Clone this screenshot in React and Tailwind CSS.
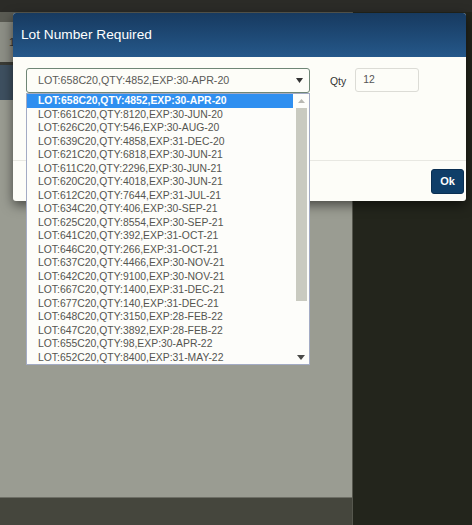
import React from 'react';

const lots = [
  'LOT:658C20,QTY:4852,EXP:30-APR-20',
  'LOT:661C20,QTY:8120,EXP:30-JUN-20',
  'LOT:626C20,QTY:546,EXP:30-AUG-20',
  'LOT:639C20,QTY:4858,EXP:31-DEC-20',
  'LOT:621C20,QTY:6818,EXP:30-JUN-21',
  'LOT:611C20,QTY:2296,EXP:30-JUN-21',
  'LOT:620C20,QTY:4018,EXP:30-JUN-21',
  'LOT:612C20,QTY:7644,EXP:31-JUL-21',
  'LOT:634C20,QTY:406,EXP:30-SEP-21',
  'LOT:625C20,QTY:8554,EXP:30-SEP-21',
  'LOT:641C20,QTY:392,EXP:31-OCT-21',
  'LOT:646C20,QTY:266,EXP:31-OCT-21',
  'LOT:637C20,QTY:4466,EXP:30-NOV-21',
  'LOT:642C20,QTY:9100,EXP:30-NOV-21',
  'LOT:667C20,QTY:1400,EXP:31-DEC-21',
  'LOT:677C20,QTY:140,EXP:31-DEC-21',
  'LOT:648C20,QTY:3150,EXP:28-FEB-22',
  'LOT:647C20,QTY:3892,EXP:28-FEB-22',
  'LOT:655C20,QTY:98,EXP:30-APR-22',
  'LOT:652C20,QTY:8400,EXP:31-MAY-22',
];

const LotDropdown = () => {
  return (
    <div className="absolute left-[13px] top-[36px] w-[284px] h-[272px] bg-[#fdfdfa] border border-[#a3abc4] flex">
      <div className="flex-1 flex flex-col">
        {lots.map((lot, i) => (
          <div
            key={lot}
            className={
              i === 0
                ? 'h-[13.5px] leading-[13.5px] pl-[11px] text-[10.4px] font-bold text-white bg-[#2f8ff0] whitespace-nowrap'
                : 'h-[13.5px] leading-[13.5px] pl-[11px] text-[10.4px] text-[#555550] whitespace-nowrap'
            }
          >
            {lot}
          </div>
        ))}
      </div>
      <div className="w-[16px] flex flex-col items-center">
        <div className="h-[14px] flex items-center justify-center">
          <svg width="7" height="4" viewBox="0 0 7 4"><path d="M0 4 L3.5 0 L7 4 Z" fill="#b8b8b2" /></svg>
        </div>
        <div className="w-[11px] h-[193px] bg-[#c9cac0]" />
        <div className="flex-1" />
        <div className="h-[14px] flex items-center justify-center">
          <svg width="8" height="5" viewBox="0 0 8 5"><path d="M0 0 L8 0 L4 5 Z" fill="#4a4a48" /></svg>
        </div>
      </div>
    </div>
  );
};

const LotModal = () => {
  return (
    <div className="absolute left-[13px] top-[13px] w-[453px] h-[188px] bg-[#fdfdf8] rounded-[3px] shadow-[0_4px_12px_rgba(0,0,0,0.55)] flex flex-col">
      <div className="h-[44px] rounded-t-[3px] bg-gradient-to-b from-[#173a60] to-[#25588a] flex items-center pl-[8px]">
        <span className="text-[13.7px] text-white">Lot Number Required</span>
      </div>
      <div className="relative h-[103px] pt-[11px] px-[13px] flex items-start">
        <div className="w-[284px] h-[25px] border border-[#6f8676] rounded-[3px] bg-[#fdfdf8] flex items-center justify-between pl-[11px] pr-[6px]">
          <span className="text-[10.7px] text-[#5a5a56] whitespace-nowrap">LOT:658C20,QTY:4852,EXP:30-APR-20</span>
          <svg width="7" height="5" viewBox="0 0 7 5"><path d="M0 0 L7 0 L3.5 5 Z" fill="#333" /></svg>
        </div>
        <span className="ml-[20px] mt-[6px] text-[10.4px] text-[#333]">Qty</span>
        <div className="ml-[9px] w-[64px] h-[24px] border border-[#dcdcd6] rounded-[3px] flex items-center pl-[7px]">
          <span className="text-[10.4px] text-[#555]">12</span>
        </div>
        <LotDropdown />
      </div>
      <div className="flex-1 border-t border-[#e8e8e2] flex items-start justify-end pt-[8px] pr-[2px]">
        <button className="w-[33px] h-[25px] rounded-[3px] bg-[#0f3e68] border border-[#0a2f52] text-white text-[11px] font-bold">
          Ok
        </button>
      </div>
    </div>
  );
};

const App = () => {
  return (
    <div className="relative w-[472px] h-[525px] overflow-hidden flex flex-col bg-[#23251c] font-['Liberation_Sans',Arial,sans-serif]">
      <div className="h-[12px] bg-[#2b2b27]" />
      <div className="flex-1 flex">
        <div className="w-[352px] flex flex-col bg-[#9a9c92]">
          <div className="h-[10px] bg-[#5a5b53]" />
          <div className="h-[40px] bg-[#8d8f86] flex items-center pl-[9px]">
            <span className="text-[11px] text-[#333]">1</span>
          </div>
          <div className="h-[3px] bg-[#3a3b35]" />
          <div className="h-[35px] bg-[#3e5060]" />
          <div className="flex-1" />
          <div className="h-[28px] bg-[#45463d] border-t border-[#6d6e65]" />
        </div>
        <div className="w-px bg-[#56574e]" />
        <div className="flex-1 bg-[#23251c]" />
      </div>
      <LotModal />
    </div>
  );
};

export default App;
